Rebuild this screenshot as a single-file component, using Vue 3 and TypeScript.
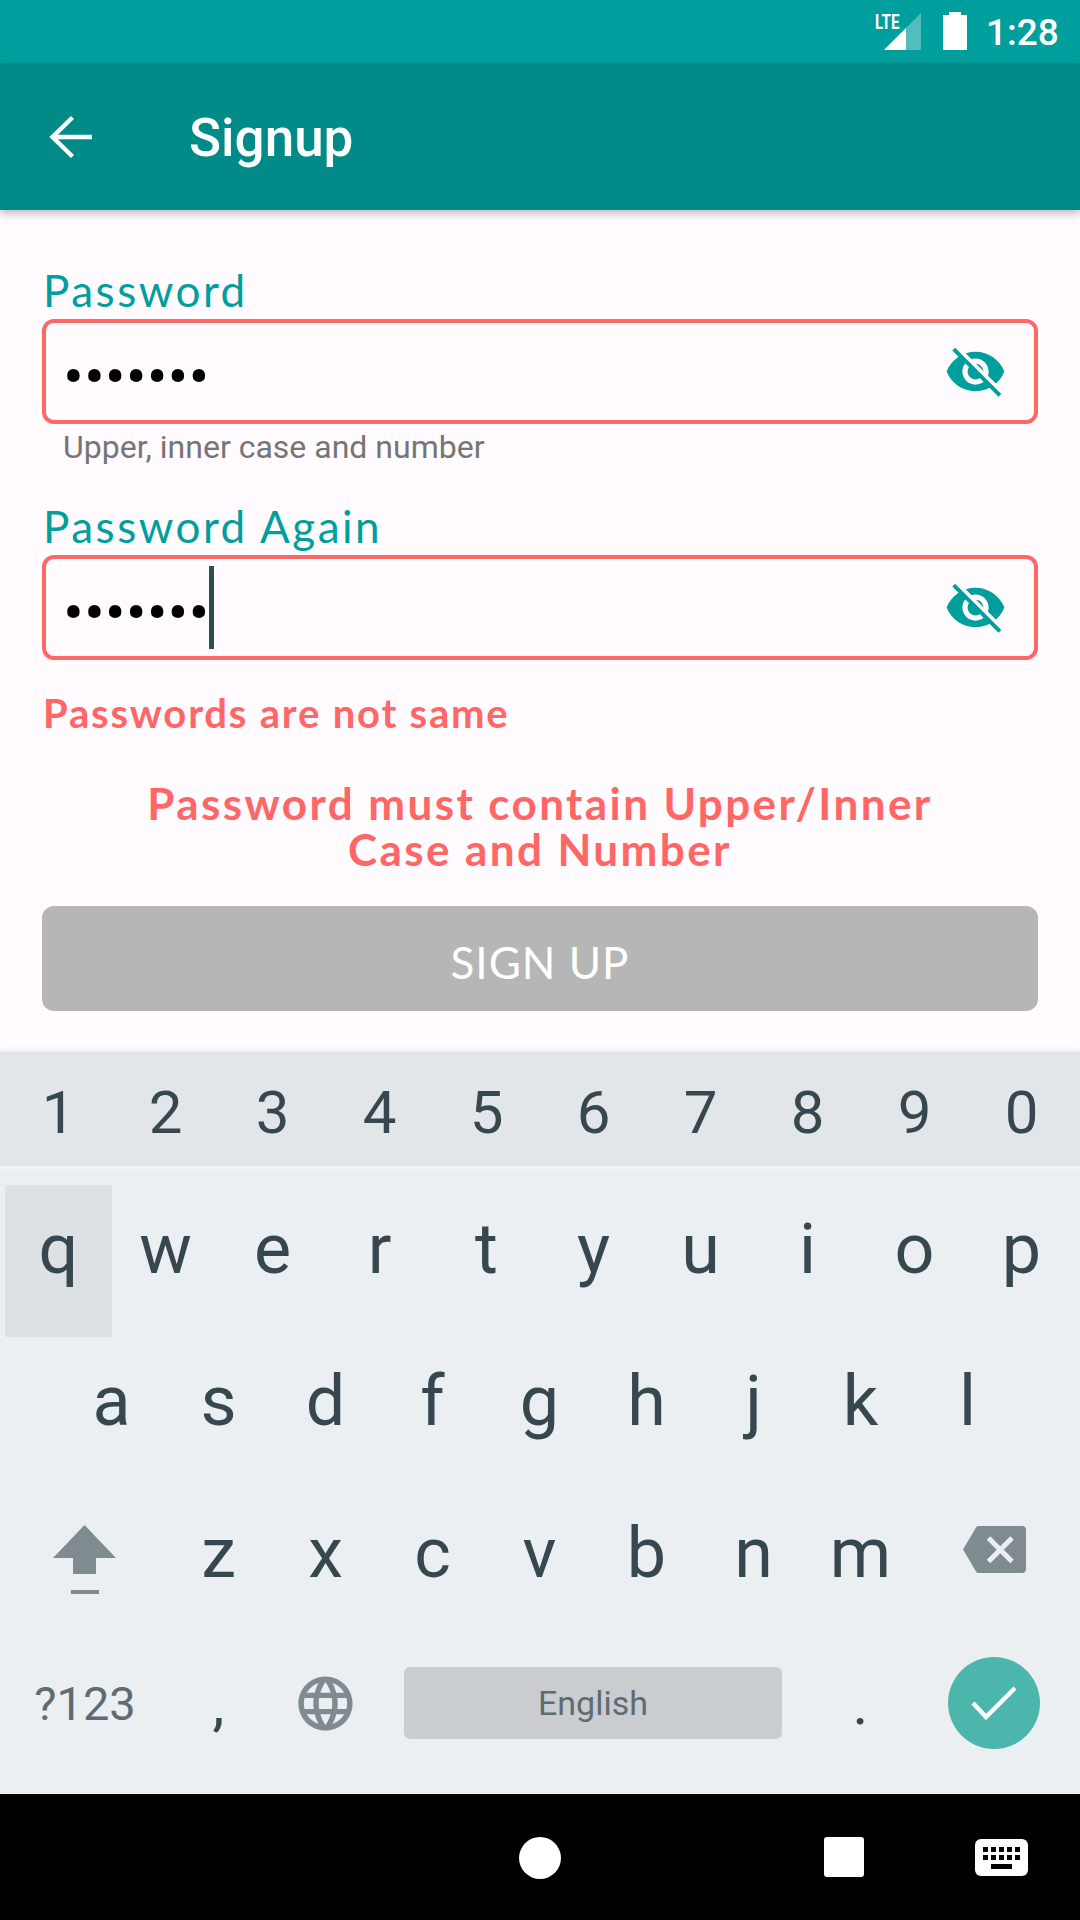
<script setup lang="ts">
const digits: string[] = ['1', '2', '3', '4', '5', '6', '7', '8', '9', '0']
const rowOne: string[] = ['q', 'w', 'e', 'r', 't', 'y', 'u', 'i', 'o', 'p']
const rowTwo: string[] = ['a', 's', 'd', 'f', 'g', 'h', 'j', 'k', 'l']
const rowThree: string[] = ['z', 'x', 'c', 'v', 'b', 'n', 'm']
const dots = '•••••••'
const navKeys: number[] = [0, 1, 2, 3, 4]
</script>

<template>
  <div class="screen">
    <header class="status">
      <span class="lte">LTE</span>
      <svg class="signal" width="37" height="37" viewBox="0 0 37 37">
        <path d="M0 37 37 0v37z" fill="#fff" fill-opacity=".32" />
        <path d="M0 37 22 15v22z" fill="#fff" />
      </svg>
      <svg class="battery" width="24" height="38" viewBox="0 0 24 38">
        <path d="M6 0h12v3h6v35H0V3h6z" fill="#fff" />
      </svg>
      <span class="clock">1:28</span>
    </header>

    <nav class="appbar">
      <svg class="back" width="44" height="44" viewBox="0 0 44 44" fill="none" stroke="#fff" stroke-width="4.4">
        <path d="M43 22H4M23.500 2.500 3.500 22 23.500 41.500" />
      </svg>
      <h1 class="title">Signup</h1>
    </nav>

    <main class="form">
      <label class="label">Password</label>
      <div class="field">
        <span class="dots">{{ dots }}</span>
        <svg class="eye" width="63" height="63" viewBox="0 0 24 24">
          <path fill="#009e9c" d="M12 4.500C7 4.500 2.730 7.610 1 12c1.730 4.390 6 7.500 11 7.500s9.270-3.110 11-7.500c-1.730-4.390-6-7.500-11-7.500zM12 17c-2.760 0-5-2.240-5-5s2.240-5 5-5 5 2.240 5 5-2.240 5-5 5zm0-8c-1.660 0-3 1.340-3 3s1.340 3 3 3 3-1.340 3-3-1.340-3-3-3z" />
          <path d="M4.600 3 22 20.400" stroke="#fffbff" stroke-width="2.200" />
          <path d="M3.700 3.500 21.300 21.100" stroke="#009e9c" stroke-width="1.500" />
        </svg>
      </div>
      <p class="helper">Upper, inner case and number</p>

      <label class="label">Password Again</label>
      <div class="field">
        <span class="dots">{{ dots }}</span>
        <i class="caret"></i>
        <svg class="eye" width="63" height="63" viewBox="0 0 24 24">
          <path fill="#009e9c" d="M12 4.500C7 4.500 2.730 7.610 1 12c1.730 4.390 6 7.500 11 7.500s9.270-3.110 11-7.500c-1.730-4.390-6-7.500-11-7.500zM12 17c-2.760 0-5-2.240-5-5s2.240-5 5-5 5 2.240 5 5-2.240 5-5 5zm0-8c-1.660 0-3 1.340-3 3s1.340 3 3 3 3-1.340 3-3-1.340-3-3-3z" />
          <path d="M4.600 3 22 20.400" stroke="#fffbff" stroke-width="2.200" />
          <path d="M3.700 3.500 21.300 21.100" stroke="#009e9c" stroke-width="1.500" />
        </svg>
      </div>

      <p class="error">Passwords are not same</p>
      <p class="notice">Password must contain Upper/Inner<br />Case and Number</p>
      <button class="submit" type="button">SIGN UP</button>
    </main>

    <section class="keyboard">
      <div class="numbers">
        <span v-for="d in digits" :key="d" class="digit">{{ d }}</span>
      </div>
      <div class="letters">
        <div class="row">
          <span v-for="(k, i) in rowOne" :key="k" class="key" :class="{ pressed: i === 0 }">{{ k }}</span>
        </div>
        <div class="row indented">
          <span v-for="k in rowTwo" :key="k" class="key">{{ k }}</span>
        </div>
        <div class="row">
          <span class="key wide shift">
            <svg width="64" height="70" viewBox="0 0 64 70" fill="#7f8b90">
              <path d="M31.500 0 63 33H43v16H20V33H0z" />
              <rect x="18" y="65" width="28" height="4" />
            </svg>
          </span>
          <span v-for="k in rowThree" :key="k" class="key">{{ k }}</span>
          <span class="key wide erase">
            <svg width="63" height="47" viewBox="0 0 63 47">
              <path fill="#7f8b90" d="M16 0h43a4 4 0 0 1 4 4v39a4 4 0 0 1-4 4H16a3 3 0 0 1-3-1.500L0 23.500 13 1.500A3 3 0 0 1 16 0z" />
              <path stroke="#ebeff2" stroke-width="5" d="M25.500 12 49 35.500M49 12 25.500 35.500" />
            </svg>
          </span>
        </div>
        <div class="row bottom">
          <span class="key wide symbols">?123</span>
          <span class="key punct">,</span>
          <span class="key">
            <svg width="65" height="65" viewBox="0 0 24 24">
              <path fill="#7f8b90" d="M11.990 2C6.470 2 2 6.480 2 12s4.470 10 9.990 10C17.520 22 22 17.520 22 12S17.520 2 11.990 2zm6.930 6h-2.950c-.32-1.250-.78-2.450-1.380-3.560 1.840.63 3.370 1.910 4.330 3.560zM12 4.040c.83 1.200 1.480 2.530 1.910 3.960h-3.820c.43-1.430 1.080-2.760 1.910-3.960zM4.260 14C4.100 13.360 4 12.690 4 12s.1-1.360.26-2h3.380c-.08.66-.14 1.320-.14 2 0 .68.06 1.340.14 2H4.260zm.82 2h2.950c.32 1.250.78 2.450 1.380 3.560-1.840-.63-3.370-1.900-4.330-3.560zm2.950-8H5.080c.96-1.660 2.490-2.930 4.330-3.560C8.810 5.550 8.350 6.750 8.030 8zM12 19.960c-.83-1.200-1.480-2.530-1.910-3.960h3.820c-.43 1.430-1.080 2.760-1.910 3.960zM14.340 14H9.660c-.09-.66-.16-1.320-.16-2 0-.68.07-1.350.16-2h4.680c.09.65.16 1.320.16 2 0 .68-.07 1.340-.16 2zm.25 5.560c.6-1.110 1.060-2.310 1.380-3.560h2.950c-.96 1.650-2.490 2.930-4.330 3.560zM16.360 14c.08-.66.14-1.320.14-2 0-.68-.06-1.340-.14-2h3.380c.16.64.26 1.310.26 2s-.1 1.360-.26 2h-3.380z" />
            </svg>
          </span>
          <span class="space-key"><span class="space">English</span></span>
          <span class="key punct">.</span>
          <span class="key wide">
            <span class="enter">
              <svg width="46" height="36" viewBox="0 0 46 36" fill="none" stroke="#fff" stroke-width="4.400">
                <path d="M2 18 15 32 44 3" />
              </svg>
            </span>
          </span>
        </div>
      </div>
    </section>

    <footer class="navbar">
      <i class="nav-home"></i>
      <i class="nav-recent"></i>
      <span class="nav-keyboard">
        <span class="nav-keys">
          <i v-for="n in navKeys" :key="'a' + n"></i>
          <i v-for="n in navKeys" :key="'b' + n"></i>
        </span>
        <i class="nav-space"></i>
      </span>
    </footer>
  </div>
</template>

<style>
html,
body {
  margin: 0;
  padding: 0;
  background: #fffbff;
}
</style>

<style scoped>
.screen {
  width: 1080px;
  height: 1920px;
  display: flex;
  flex-direction: column;
  overflow: hidden;
  background: #fffbff;
  font-family: Roboto, "Liberation Sans", sans-serif;
}

/* status bar */
.status {
  height: 63px;
  flex: none;
  background: #009e9c;
  display: flex;
  align-items: flex-start;
  justify-content: flex-end;
  color: #fff;
  position: relative;
}
.lte {
  position: absolute;
  left: 875px;
  top: 12px;
  font-size: 20px;
  line-height: 20px;
  font-weight: 700;
  transform: scaleX(0.76);
  transform-origin: left top;
}
.signal {
  position: absolute;
  left: 884px;
  top: 13px;
}
.battery {
  position: absolute;
  left: 943px;
  top: 12px;
}
.clock {
  position: absolute;
  left: 986px;
  top: 12px;
  font-size: 37px;
  line-height: 42px;
  font-weight: 500;
}

/* app bar */
.appbar {
  height: 147px;
  flex: none;
  background: #008b88;
  display: flex;
  align-items: center;
  padding-left: 49px;
  box-sizing: border-box;
  box-shadow: 0 4px 8px rgba(0, 0, 0, 0.24);
  position: relative;
  z-index: 2;
}
.title {
  margin: 3px 0 0 96px;
  font-size: 53px;
  font-weight: 500;
  color: #fff;
}

/* form */
.form {
  flex: 1;
  padding: 58px 42px 0;
  display: flex;
  flex-direction: column;
  font-family: Lato, "Open Sans", sans-serif;
}
.label {
  display: block;
  height: 51px;
  padding-left: 1px;
  font-size: 44px;
  line-height: 44px;
  letter-spacing: 2.500px;
  color: #009e9c;
}
.field {
  height: 105px;
  flex: none;
  box-sizing: border-box;
  border: 4px solid #ff6666;
  border-radius: 12px;
  display: flex;
  align-items: center;
  position: relative;
  padding: 11px 0 0 17px;
}
.dots {
  font-family: Roboto, sans-serif;
  font-size: 62px;
  line-height: 62px;
  color: #000;
}
.caret {
  position: absolute;
  left: 163px;
  top: 7px;
  width: 5px;
  height: 83px;
  background: #2f4f4f;
}
.eye {
  position: absolute;
  left: 898px;
  top: 17px;
}
.helper {
  margin: 0;
  height: 80px;
  padding: 5px 0 0 21px;
  box-sizing: border-box;
  font-family: Roboto, sans-serif;
  font-size: 32px;
  line-height: 36px;
  color: #757575;
}
.error {
  margin: 0;
  padding: 30px 0 0 1px;
  font-size: 40px;
  line-height: 46px;
  letter-spacing: 1.800px;
  font-weight: 700;
  color: #ff6666;
}
.notice {
  margin: 44px 0 0;
  text-align: center;
  font-size: 44px;
  line-height: 46px;
  letter-spacing: 2.400px;
  font-weight: 700;
  color: #ff6666;
}
.submit {
  margin-top: 34px;
  height: 105px;
  flex: none;
  border: 0;
  border-radius: 12px;
  background: #b6b6b6;
  color: #fff;
  font-family: inherit;
  font-size: 44px;
  letter-spacing: 1px;
  padding: 6px 0 0;
}

/* keyboard */
.keyboard {
  height: 742px;
  flex: none;
  background: #ebeff2;
  box-shadow: 0 -3px 5px rgba(0, 0, 0, 0.06);
  color: #37474f;
  display: flex;
  flex-direction: column;
}
.numbers {
  height: 114px;
  flex: none;
  padding: 0 5px;
  background: #e2e6e8;
  border-bottom: 3px solid #f0f3f4;
  display: flex;
}
.digit {
  width: 107px;
  text-align: center;
  font-size: 60px;
  line-height: 122px;
}
.letters {
  flex: 1;
  padding: 16px 5px 0;
}
.row {
  height: 152px;
  display: flex;
}
.indented {
  padding-left: 53px;
}
.key {
  width: 107px;
  flex: none;
  box-sizing: border-box;
  padding-bottom: 24px;
  display: flex;
  align-items: center;
  justify-content: center;
  font-size: 70px;
}
.key.pressed {
  background: #dde1e4;
}
.wide {
  width: 160px;
}
.key.shift {
  padding-bottom: 10px;
}
.key.erase {
  padding-bottom: 31px;
}
.bottom .key {
  padding-bottom: 28px;
}
.symbols {
  font-size: 47px;
  color: #5f6b72;
}
.punct {
  font-size: 60px;
}
.space-key {
  width: 428px;
  flex: none;
  padding: 26px 25px 0;
  box-sizing: border-box;
}
.space {
  display: block;
  height: 72px;
  border-radius: 6px;
  background: #c9cdd0;
  text-align: center;
  font-size: 34px;
  line-height: 72px;
  color: #5f6b72;
}
.enter {
  width: 92px;
  height: 92px;
  border-radius: 50%;
  background: #4db6ac;
  display: flex;
  align-items: center;
  justify-content: center;
}

/* system nav */
.navbar {
  height: 126px;
  flex: none;
  background: #000;
  position: relative;
}
.nav-home {
  position: absolute;
  left: 519px;
  top: 43px;
  width: 42px;
  height: 42px;
  border-radius: 50%;
  background: #fff;
}
.nav-recent {
  position: absolute;
  left: 824px;
  top: 43px;
  width: 40px;
  height: 40px;
  border-radius: 3px;
  background: #fff;
}
.nav-keyboard {
  position: absolute;
  left: 975px;
  top: 45px;
  width: 53px;
  height: 37px;
  border-radius: 6px;
  background: #fff;
  display: flex;
  flex-direction: column;
  align-items: center;
  padding-top: 8px;
  box-sizing: border-box;
}
.nav-keys {
  display: grid;
  grid-template-columns: repeat(5, 5px);
  grid-auto-rows: 5px;
  gap: 3px;
}
.nav-keys i {
  background: #000;
}
.nav-space {
  margin-top: 4px;
  width: 21px;
  height: 5px;
  background: #000;
}
</style>
